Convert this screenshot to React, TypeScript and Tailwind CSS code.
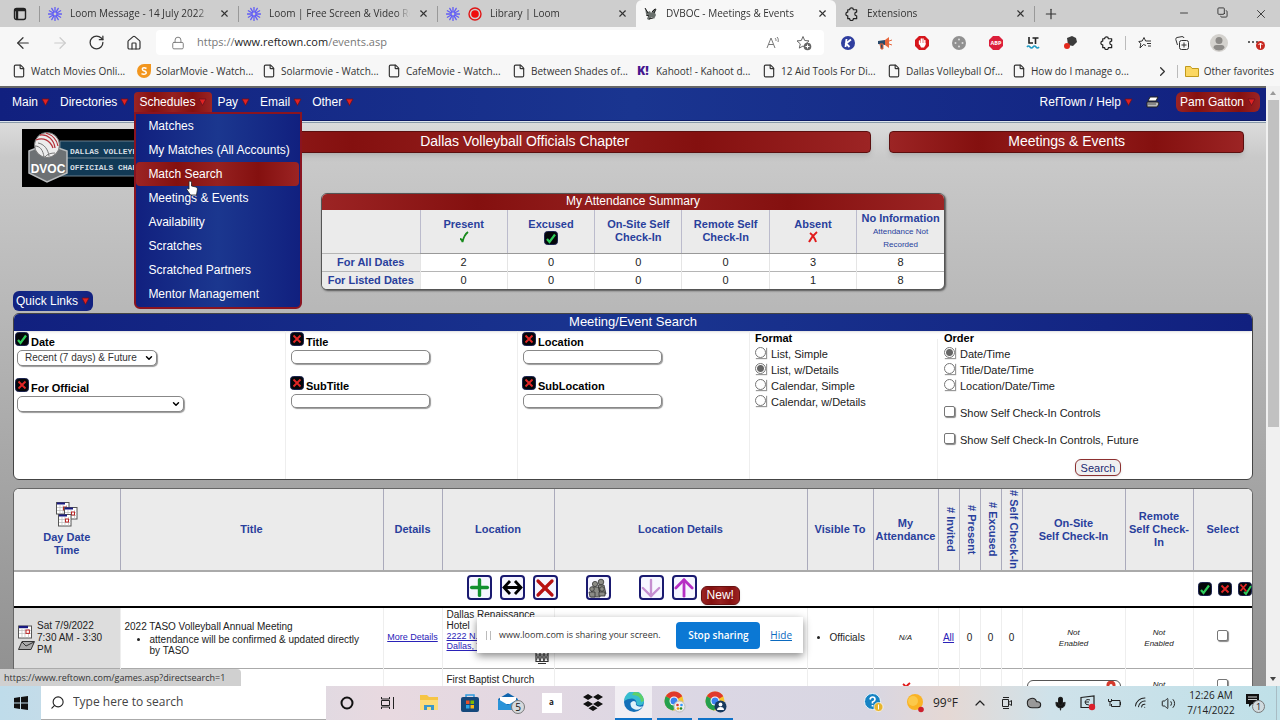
import React from 'react'
import type { ReactNode } from 'react'
import {
  ArrowDown,
  ArrowLeft,
  ArrowRight,
  ArrowUp,
  ChevronDown,
  ChevronRight,
  ChevronUp,
  Cloud,
  Copy,
  File,
  House,
  Lock,
  Mic,
  Minus,
  Plus,
  RotateCw,
  Search,
  Star,
  Volume2,
  Wifi,
  X,
} from 'lucide-react'

const uiFont = "font-['Open_Sans','Noto_Sans',sans-serif]"
const pageFont = "font-['Liberation_Sans',Arial,sans-serif]"

const blueBar = 'bg-[linear-gradient(90deg,#11207f,#1a3590_50%,#11207f)]'
const redBar = 'bg-[linear-gradient(90deg,#9c2424,#84100f_25%,#962120_50%,#84100f_75%,#9c2424)]'

const favorites = [
  { icon: 'file', label: 'Watch Movies Onli...' },
  { icon: 'solar', label: 'SolarMovie - Watch...' },
  { icon: 'file', label: 'Solarmovie - Watch...' },
  { icon: 'file', label: 'CafeMovie - Watch...' },
  { icon: 'file', label: 'Between Shades of...' },
  { icon: 'kahoot', label: 'Kahoot! - Kahoot d...' },
  { icon: 'file', label: '12 Aid Tools For Di...' },
  { icon: 'file', label: 'Dallas Volleyball Of...' },
  { icon: 'file', label: 'How do I manage o...' },
]

const scheduleItems = [
  'Matches',
  'My Matches (All Accounts)',
  'Match Search',
  'Meetings & Events',
  'Availability',
  'Scratches',
  'Scratched Partners',
  'Mentor Management',
]

/* ---------- small drawings ---------- */

const LoomMark = () => (
  <svg viewBox="0 0 14 14" className="size-[14px] shrink-0" aria-hidden="true">
    {[0, 30, 60, 90, 120, 150].map((a) => (
      <path key={a} d="M7 0.5V13.5" stroke="#625df5" strokeWidth="1.3" strokeLinecap="round" transform={`rotate(${a} 7 7)`} />
    ))}
    <circle cx="7" cy="7" r="2.4" fill="#625df5" />
    <circle cx="7" cy="7" r="1.4" fill="#cecece" />
  </svg>
)

const RecordDot = () => (
  <svg viewBox="0 0 14 14" className="size-[14px] shrink-0" aria-hidden="true">
    <circle cx="7" cy="7" r="6" fill="none" stroke="#e01515" strokeWidth="1.4" />
    <circle cx="7" cy="7" r="3.8" fill="#f00d0d" />
  </svg>
)

const PageMark = () => (
  <svg viewBox="0 0 14 14" className="size-[14px] shrink-0" aria-hidden="true">
    <path d="M1 1l3 4 2-1 1 2 2-3 3-2-1 5 1 2-2 4-2-2-3 3-2-1 1-3-2-2z" fill="#6a706d" />
    <path d="M2 8l3 1M8 5l3-3M5 12l4-1M1 1l3 5M10 6l2-4" stroke="#1d1d1d" strokeWidth="1" />
  </svg>
)

const PuzzleMark = () => (
  <svg viewBox="0 0 16 16" className="size-[15px] shrink-0" fill="none" stroke="#222" strokeWidth="1.300" strokeLinejoin="round" aria-hidden="true">
    <path d="M4 4h2a2 2 0 0 1 4 0h3.500v2.500a2 2 0 0 0 0 4V13.500H10a2 2 0 0 1-4 0H4v-3a2 2 0 0 1 0-4z" />
  </svg>
)

const MenuArrow = () => (
  <svg viewBox="0 0 9 8" className="h-2 w-[9px] shrink-0" aria-hidden="true">
    <path d="M1 1h7L4.500 7.500z" fill="#e02222" stroke="#6b1020" strokeWidth="0.800" />
  </svg>
)

const CheckBadge = () => (
  <svg viewBox="0 0 14 14" className="size-[14px] shrink-0" aria-hidden="true">
    <rect x="0.500" y="0.500" width="13" height="13" rx="3" fill="#04060a" stroke="#1b2350" />
    <path d="M3 8l2.500 3L11 3.500" fill="none" stroke="#2ecc5a" strokeWidth="2.200" />
  </svg>
)

const CrossBadge = () => (
  <svg viewBox="0 0 14 14" className="size-[14px] shrink-0" aria-hidden="true">
    <rect x="0.500" y="0.500" width="13" height="13" rx="3" fill="#04060a" stroke="#1b2350" />
    <path d="M3.500 3.500l7 7M10.500 3.500l-7 7" stroke="#e02626" strokeWidth="1.900" />
  </svg>
)

const ToggleBadge = () => (
  <svg viewBox="0 0 14 14" className="size-[14px] shrink-0" aria-hidden="true">
    <rect x="0.500" y="0.500" width="13" height="13" rx="3" fill="#04060a" stroke="#1b2350" />
    <path d="M2.500 2.500l6 7M8.500 2l-6 7" stroke="#e02626" strokeWidth="1.800" />
    <path d="M6 10l2 2 5-8" fill="none" stroke="#2ecc5a" strokeWidth="1.900" />
  </svg>
)

const CalendarMark = () => (
  <svg viewBox="0 0 14 14" className="size-[14px]" aria-hidden="true">
    <rect x="0.500" y="1" width="13" height="12" fill="#fff" stroke="#555" />
    <path d="M1 2h9" stroke="#1a1a80" strokeWidth="2.400" />
    <path d="M1 5.500h12M1 8.500h12M4 4v9M7 4v9M10.500 4v9" stroke="#bbb" strokeWidth="0.700" />
    <rect x="8" y="5" width="3.400" height="3.400" fill="#fff" stroke="#b22" />
  </svg>
)

const CalendarStack = () => (
  <svg viewBox="0 0 22 25" className="mx-auto h-[25px] w-[22px]" aria-hidden="true">
    {[[0, 0], [8, 5], [2, 12]].map(([x, y]) => (
      <g key={x} transform={`translate(${x} ${y})`}>
        <rect x="0.500" y="0.500" width="12.500" height="11.500" fill="#fff" stroke="#555" />
        <path d="M1 1.500h8" stroke="#1a1a80" strokeWidth="2" />
        <path d="M1 5.500h12M1 8.500h12M4 3v9M7 3v9M10.500 3v9" stroke="#bbb" strokeWidth="0.700" />
        <rect x="7.500" y="5" width="3" height="3" fill="#fff" stroke="#b22" />
      </g>
    ))}
  </svg>
)

const Envelope = () => (
  <svg viewBox="0 0 17 9" className="h-[9px] w-[17px]" aria-hidden="true">
    <path d="M4 0.500h12.500L13 8.500H0.500z" fill="#aaa" stroke="#333" />
    <path d="M4 1l4 4 8-4" fill="none" stroke="#333" />
  </svg>
)

const ChapterLogo = () => (
  <svg viewBox="0 0 138 58" className="h-[58px] w-[138px]" role="img" aria-label="Dallas Volleyball Officials Chapter">
    <rect width="138" height="58" fill="#000" />
    <rect x="38" y="12" width="94" height="35" fill="#123a56" stroke="#6b7f8c" />
    <path d="M44 29h88" stroke="#6b7f8c" />
    <path d="M7 22l18-7 20 7v22L25 53 7 44z" fill="#6d7174" stroke="#b9bcbe" strokeWidth="1.500" />
    <circle cx="25" cy="16" r="12.500" fill="#ececec" stroke="#777" />
    <path d="M14 11c7-3 14 0 17 8M18 6c8-1 14 5 15 13M24 4c6 2 11 7 12 13" fill="none" stroke="#b5313a" strokeWidth="1.300" />
    <path d="M13 17c5 0 8 4 9 11M16 14c6 1 10 6 11 13M33 24c-4 0-8 1-10 4" fill="none" stroke="#777" />
    <text x="26" y="44" textAnchor="middle" fontSize="12" fontWeight="700" fill="#fff">DVOC</text>
    <text x="48" y="25" fontSize="8" fontWeight="700" fill="#d5dde2" className="font-['Liberation_Mono',monospace]">DALLAS VOLLEYBALL</text>
    <text x="48" y="41" fontSize="8" fontWeight="700" fill="#d5dde2" className="font-['Liberation_Mono',monospace]">OFFICIALS CHAPTER</text>
  </svg>
)

const Chrome = ({ children }: { children?: ReactNode }) => (
  <svg viewBox="0 0 22 22" className="size-[22px]" aria-hidden="true">
    <circle cx="10" cy="10" r="9.500" fill="#f7c52c" />
    <path d="M10 10L1.800 5.200A9.500 9.500 0 0 1 18.300 5.300z" fill="#e0392d" />
    <path d="M10 10L1.800 5.200A9.500 9.500 0 0 0 9 19.500l4-6z" fill="#24a04e" />
    <circle cx="10" cy="10" r="4.500" fill="#fff" />
    <circle cx="10" cy="10" r="3.500" fill="#3b82f0" />
    {children}
  </svg>
)

/* ---------- browser chrome ---------- */

type TabProps = { icons: ReactNode; label: string; active?: boolean }

const BrowserTab = ({ icons, label, active }: TabProps) => (
  <div
    className={
      active
        ? 'flex h-full w-[200px] items-center gap-2 rounded-t-md bg-[#f7f7f7] px-2'
        : 'flex h-full w-[198px] items-center gap-2 px-2'
    }
  >
    {icons}
    <button className="flex-1 overflow-hidden mask-r-from-90% text-left whitespace-nowrap">{label}</button>
    <button aria-label={`Close ${label}`}>
      <X className="size-[11px]" strokeWidth={2.4} />
    </button>
  </div>
)

const TabBar = () => (
  <header className="flex h-[27px] shrink-0 items-center bg-[#cecece] text-[10px] text-[#333]">
    <button aria-label="Tab actions" className="flex w-[39px] justify-center">
      <svg viewBox="0 0 14 14" className="size-[14px]" aria-hidden="true">
        <rect x="1.500" y="1.500" width="11" height="11" rx="2" fill="none" stroke="#222" strokeWidth="1.400" />
        <path d="M1.500 3h11M4 3v9" stroke="#222" strokeWidth="2.400" />
      </svg>
    </button>
    <span className="h-4 w-px bg-[#999]" />
    <BrowserTab icons={<LoomMark />} label="Loom Message - 14 July 2022" />
    <span className="h-4 w-px bg-[#999]" />
    <BrowserTab icons={<LoomMark />} label="Loom | Free Screen & Video Rec" />
    <span className="h-4 w-px bg-[#999]" />
    <BrowserTab icons={<><LoomMark /><RecordDot /></>} label="Library | Loom" />
    <BrowserTab active icons={<PageMark />} label="DVBOC - Meetings & Events" />
    <BrowserTab icons={<PuzzleMark />} label="Extensions" />
    <span className="h-4 w-px bg-[#999]" />
    <button aria-label="New tab" className="ml-2"><Plus className="size-[16px]" strokeWidth={1.8} /></button>
    <div className="ml-auto flex">
      <button aria-label="Minimize" className="flex w-[38px] justify-center"><Minus className="size-[12px]" strokeWidth={1.8} /></button>
      <button aria-label="Restore" className="flex w-[38px] justify-center"><Copy className="size-[11px] -scale-x-100 rotate-90" strokeWidth={2} /></button>
      <button aria-label="Close window" className="flex w-[39px] justify-center"><X className="size-[14px]" strokeWidth={1.6} /></button>
    </div>
  </header>
)

const ToolButton = ({ label, children }: { label: string; children: ReactNode }) => (
  <button aria-label={label} className="flex w-[37px] shrink-0 items-center justify-center">{children}</button>
)

const AddressRow = () => (
  <div className="flex h-[31px] shrink-0 items-center bg-[#f7f7f7] pr-[6px] pl-[4px] text-[#333]">
    <ToolButton label="Back"><ArrowLeft className="size-[18px]" strokeWidth={1.6} /></ToolButton>
    <ToolButton label="Forward"><ArrowRight className="size-[18px] text-[#ccc]" strokeWidth={1.6} /></ToolButton>
    <ToolButton label="Refresh"><RotateCw className="size-[17px]" strokeWidth={1.8} /></ToolButton>
    <ToolButton label="Home"><House className="size-[16px]" strokeWidth={1.8} /></ToolButton>
    <div className="ml-1 flex h-[25px] flex-1 items-center rounded bg-white pr-3 pl-[15px] text-[#777]">
      <Lock className="size-[14px]" strokeWidth={1.6} />
      <a href="#" className="ml-3 flex-1 text-[11px]">https://<span className="text-[#222]">www.reftown.com</span>/events.asp</a>
      <button aria-label="Read aloud" className="mr-4">
        <svg viewBox="0 0 14 14" className="size-[14px]" fill="none" stroke="#777" aria-hidden="true">
          <path d="M1 12L5 2l4 10M2.500 8.500h5M9 2c1 1 1 2 1 3M11 1c1.500 1.500 1.500 3.500 1 5" />
        </svg>
      </button>
      <button aria-label="Add to favorites">
        <svg viewBox="0 0 16 16" className="size-4" aria-hidden="true">
          <path d="M7 1.500l1.700 4 4.300.4-3.300 3 .8 4.200L7 11l-3.700 2.100 1-4.200L1 5.900l4.300-.4z" fill="none" stroke="#666" />
          <circle cx="11.500" cy="11.500" r="3.800" fill="#666" />
          <path d="M11.500 9.500v4M9.500 11.500h4" stroke="#fff" />
        </svg>
      </button>
    </div>
    <div className="ml-[5px] flex">
      <ToolButton label="K extension">
        <svg viewBox="0 0 14 14" className="size-[14px]" aria-hidden="true"><circle cx="7" cy="7" r="7" fill="#303f9f" /><path d="M5.500 3L4.500 11M10 3.500L5 7.500l3.500 3.500" stroke="#fff" strokeWidth="1.800" fill="none" /></svg>
      </ToolButton>
      <ToolButton label="Announcements">
        <svg viewBox="0 0 14 14" className="size-[14px]" aria-hidden="true"><path d="M0 5l7-1v5L0 8z" fill="#2b4a6b" /><path d="M7 4l4-3v11L7 9z" fill="#e8663c" /><path d="M2 8h3v5H3zM11 5l3-1M11 8l3 1" fill="#2b4a6b" stroke="#e8663c" /></svg>
      </ToolButton>
      <ToolButton label="AdBlock">
        <svg viewBox="0 0 14 14" className="size-[14px]" aria-hidden="true"><path d="M4 0h6l4 4v6l-4 4H4l-4-4V4z" fill="#d6161c" /><path d="M4.500 8V5M6.300 7V3M8 7V3M9.800 8V4.500" stroke="#fff" strokeWidth="1.400" strokeLinecap="round" /><path d="M4 7h6.500v2L9 11.500H6z" fill="#fff" /></svg>
      </ToolButton>
      <ToolButton label="Cookie">
        <svg viewBox="0 0 14 14" className="size-[14px]" aria-hidden="true"><circle cx="7" cy="7" r="7" fill="#919191" /><g fill="#ddd"><circle cx="7" cy="3.500" r="1" /><circle cx="3.500" cy="7" r="1" /><circle cx="10.500" cy="7" r="1" /><circle cx="7" cy="10.500" r="1" /></g></svg>
      </ToolButton>
      <ToolButton label="Adblock Plus">
        <svg viewBox="0 0 14 14" className="size-[14px]" aria-hidden="true"><path d="M4 0h6l4 4v6l-4 4H4l-4-4V4z" fill="#dc1f3b" /><text x="7" y="9" textAnchor="middle" fontSize="5.500" fontWeight="700" fill="#fff">ABP</text></svg>
      </ToolButton>
      <ToolButton label="LanguageTool">
        <svg viewBox="0 0 14 14" className="size-[14px]" aria-hidden="true"><path d="M3 1v6h4M6.500 2h6M9.500 2v6" stroke="#222" strokeWidth="1.600" fill="none" /><path d="M1 11q1.500-2 3 0t3 0 3 0 3 0" stroke="#1f9bc4" strokeWidth="1.600" fill="none" /></svg>
      </ToolButton>
      <ToolButton label="Pin">
        <svg viewBox="0 0 14 14" className="size-[14px]" aria-hidden="true"><path d="M4 2l5-2 4 2 1 4-4 4-5-1z" fill="#3c3c3c" /><circle cx="4" cy="10" r="3" fill="#e3291c" /></svg>
      </ToolButton>
      <ToolButton label="Extensions"><PuzzleMark /></ToolButton>
    </div>
    <span className="h-[14px] w-px bg-[#bbb]" />
    <ToolButton label="Favorites">
      <svg viewBox="0 0 14 14" className="size-[14px]" fill="none" stroke="#333" aria-hidden="true"><path d="M8 9.500L5.500 8.500 2 12l.8-4.200L.8 5.500l3.400-.5L6 1.500 7.600 5H13M9 7.500h4M10 10h3" /></svg>
    </ToolButton>
    <ToolButton label="Collections">
      <svg viewBox="0 0 14 14" className="size-[14px]" fill="none" stroke="#333" aria-hidden="true"><rect x="4.500" y="4.500" width="9" height="9" rx="2" /><path d="M9 6.500v5M6.500 9h5M2.500 9L.8 3.500Q.5 2 2 1.500L7 .6q1.500-.2 2 1.400" /></svg>
    </ToolButton>
    <ToolButton label="Profile">
      <svg viewBox="0 0 18 18" className="size-[18px]" aria-hidden="true"><circle cx="9" cy="9" r="9" fill="#d4d2ce" /><circle cx="9" cy="6.500" r="3.500" fill="#8d8b88" /><path d="M3.500 14q0-3 3-3h5q3 0 3 3-2 2.500-5.500 2.500T3.500 14z" fill="#8d8b88" /></svg>
    </ToolButton>
    <ToolButton label="Settings and more">
      <svg viewBox="0 0 18 14" className="h-[14px] w-[18px]" aria-hidden="true"><g fill="#333"><circle cx="2" cy="6" r="1" /><circle cx="6" cy="6" r="1" /><circle cx="10" cy="6" r="1" /></g><circle cx="13.500" cy="9.500" r="4.500" fill="#c92a22" /><path d="M13.500 12.500V7M11.500 9l2-2 2 2" stroke="#fff" fill="none" /></svg>
    </ToolButton>
  </div>
)

const FavoriteIcon = ({ kind }: { kind: string }) => {
  if (kind === 'solar') {
    return (
      <svg viewBox="0 0 14 14" className="size-[14px] shrink-0" aria-hidden="true"><path d="M0 7a7 7 0 0 1 7-7h7v7a7 7 0 0 1-14 0z" fill="#f2961f" /><path d="M9.500 4.500Q7 3 5.500 4.300 5 6.500 7.500 7q2.300.8 1.500 2.500Q7 11 4.500 9.600" stroke="#fff" strokeWidth="1.500" fill="none" /></svg>
    )
  }
  if (kind === 'kahoot') {
    return <span className="w-[14px] shrink-0 text-xs font-extrabold text-[#46178f]">K!</span>
  }
  return <File className="size-[14px] shrink-0" strokeWidth={2} />
}

const FavoritesBar = () => (
  <nav className="flex h-[28px] shrink-0 items-center bg-[#f7f7f7] pb-[2px] pl-3 text-[10px] text-[#333]">
    {favorites.map((item) => (
      <a href="#" key={item.label} className="flex w-[125px] items-center gap-[5px] whitespace-nowrap">
        <FavoriteIcon kind={item.icon} />
        {item.label}
      </a>
    ))}
    <button aria-label="More favorites" className="ml-auto"><ChevronRight className="size-[15px]" strokeWidth={2} /></button>
    <span className="mx-[7px] h-[13px] w-px bg-[#bbb]" />
    <a href="#" className="flex items-center gap-[5px] pr-[6px] whitespace-nowrap">
      <svg viewBox="0 0 14 12" className="h-3 w-[14px]" aria-hidden="true"><path d="M.5 1.500h5l1.500 2h6.500v8H.5z" fill="#fbd762" stroke="#c19a1c" /></svg>
      Other favorites
    </a>
  </nav>
)

/* ---------- site navigation ---------- */

const MenuButton = ({ label }: { label: string }) => (
  <button className="flex items-center gap-[3px] px-[5px] py-[2px]">{label}<MenuArrow /></button>
)

const ScheduleMenu = () => (
  <ul className="absolute top-5 left-0 z-20 w-[168px] rounded-b-md border-2 border-[#8a1420] bg-[linear-gradient(90deg,#11207f,#1b378f_50%,#11207f)] pb-px">
    {scheduleItems.map((item) => (
      <li key={item}>
        <a
          href="#"
          className={
            item === 'Match Search'
              ? `mr-px flex h-6 items-center rounded pl-3 ${redBar}`
              : 'flex h-6 items-center pl-3'
          }
        >
          {item}
        </a>
      </li>
    ))}
    <svg viewBox="0 0 12 16" className="absolute top-[66px] left-[50px] h-4 w-3" aria-hidden="true">
      <path d="M4 1q1.500 0 1.500 1.500V6l4.500 1q1.500.5 1.500 2L10.500 15H4.500L.8 9.500Q1.500 8 3 9V2Q3 1 4 1z" fill="#fff" stroke="#222" strokeWidth="0.800" />
    </svg>
  </ul>
)

const SiteNav = () => (
  <nav className={`flex h-[33px] items-center border-b border-[#0d1a66] pr-[6px] pb-[4px] pl-[7px] text-xs text-white ${blueBar}`}>
    <MenuButton label="Main" />
    <MenuButton label="Directories" />
    <div className={`relative rounded-t ${redBar}`}>
      <MenuButton label="Schedules" />
      <ScheduleMenu />
    </div>
    <MenuButton label="Pay" />
    <MenuButton label="Email" />
    <MenuButton label="Other" />
    <div className="ml-auto flex items-center">
      <MenuButton label="RefTown / Help" />
      <button aria-label="Print" className="mr-4 ml-2">
        <svg viewBox="0 0 14 12" className="h-3 w-[14px]" aria-hidden="true"><path d="M4 1h8l-2 4H2z" fill="#fff" stroke="#222" /><path d="M1 6h11l1 2-2 3H1z" fill="#bbb" stroke="#222" /><path d="M2 8h8" stroke="#555" /></svg>
      </button>
      <button className={`flex items-center gap-[3px] rounded-md px-1 py-[2px] ${redBar}`}>Pam Gatton<MenuArrow /></button>
    </div>
  </nav>
)

/* ---------- page content ---------- */

const attendance = [
  { label: 'For All Dates', values: [2, 0, 0, 0, 3, 8] },
  { label: 'For Listed Dates', values: [0, 0, 0, 0, 1, 8] },
]

const summaryHead = 'border border-[#bbc] border-t-0 border-b-[#999] p-0 leading-[13px] font-bold'

const AttendanceSummary = () => (
  <section className="mx-auto mt-[6px] w-[624px] overflow-hidden rounded-md border border-[#555] bg-white text-[11px] shadow-[1px_1px_2px_#555]">
    <h2 className={`h-[16px] text-center text-xs leading-[15px] text-white ${redBar}`}>My Attendance Summary</h2>
    <table className="w-full table-fixed border-collapse text-center">
      <colgroup><col className="w-[98px]" /></colgroup>
      <thead>
        <tr className="h-[43px] bg-[#ebebeb] text-[#293f9c]">
          <th aria-label="Range" />
          <th className={summaryHead}>
            Present
            <svg viewBox="0 0 12 13" className="mx-auto h-[13px] w-3" aria-hidden="true"><path d="M2 8q2 0 2.500 3Q6 4 10 1" stroke="#188a1c" strokeWidth="1.800" fill="none" /></svg>
          </th>
          <th className={summaryHead}><span className="flex flex-col items-center">Excused<CheckBadge /></span></th>
          <th className={summaryHead}>On-Site Self<br />Check-In</th>
          <th className={summaryHead}>Remote Self<br />Check-In</th>
          <th className={summaryHead}>
            Absent
            <svg viewBox="0 0 12 13" className="mx-auto h-[13px] w-3" aria-hidden="true"><path d="M3 2q4 3 6 9M10 1Q5 5 2 11" stroke="#e11b1b" strokeWidth="2" fill="none" /></svg>
          </th>
          <th className="border-b border-[#999] p-0 leading-[13px] font-bold">
            No Information
            <span className="block text-[8px] font-normal">Attendance Not Recorded</span>
          </th>
        </tr>
      </thead>
      <tbody>
        {attendance.map((row) => (
          <tr key={row.label} className="h-[18px] border-t border-[#b5b5b5]">
            <th className="bg-[#ebebeb] p-0 leading-[15px] text-[#293f9c]">{row.label}</th>
            {row.values.map((value, i) => (
              <td key={i} className="border-l border-[#e5e5e5] p-0 leading-[15px] text-[#222]">{value}</td>
            ))}
          </tr>
        ))}
      </tbody>
    </table>
  </section>
)

const fieldStyle = 'rounded-[5px] border border-[#888] bg-white shadow-[1px_1px_1px_#999]'

type FieldProps = { id: string; label: string; on?: boolean }

const FieldLabel = ({ id, label, on }: FieldProps) => (
  <div className="flex h-[19px] gap-[2px] pt-px">
    <button type="button" aria-label={`Toggle ${label}`} className="flex items-start">{on ? <CheckBadge /> : <CrossBadge />}</button>
    <label htmlFor={id} className="pt-[3px] leading-[15px] font-bold text-black">{label}</label>
  </div>
)

const TextField = ({ id, label }: FieldProps) => (
  <div className="mb-[11px]">
    <FieldLabel id={id} label={label} />
    <input id={id} type="text" className={`ml-px block h-[14px] w-[139px] ${fieldStyle}`} />
  </div>
)

const SelectField = ({ id, label, on, option, wide }: FieldProps & { option: string; wide?: boolean }) => (
  <div className="mb-[11px]">
    <FieldLabel id={id} label={label} on={on} />
    <div className={wide ? 'relative ml-[2px] w-[167px]' : 'relative ml-[2px] w-[140px]'}>
      <select id={id} className={`block h-4 w-full appearance-none pl-[7px] text-[10px] leading-[14px] text-[#333] ${fieldStyle}`}>
        <option>{option}</option>
      </select>
      <ChevronDown className="pointer-events-none absolute top-[3px] right-[3px] size-[10px] text-black" strokeWidth={3.5} />
    </div>
  </div>
)

const RadioRow = ({ name, label, checked }: { name: string; label: string; checked?: boolean }) => (
  <label className="flex h-4 items-center gap-[5px]">
    <span className="mb-[3px] flex shadow-[1px_1px_1px_#999]">
      <input
        type="radio"
        name={name}
        defaultChecked={checked}
        className="size-[11px] appearance-none rounded-full border border-[#777] bg-white checked:bg-[radial-gradient(circle,#666_0_3px,#fff_4px)]"
      />
    </span>
    {label}
  </label>
)

const tickBox = 'size-[11px] appearance-none rounded-[2px] border border-[#777] bg-white shadow-[1px_1px_1px_#888] checked:bg-[#666]'

const TickRow = ({ label }: { label: string }) => (
  <label className="mt-[11px] flex h-4 items-center gap-[5px]">
    <input type="checkbox" className={`mb-[3px] ${tickBox}`} />
    {label}
  </label>
)

const SearchPanel = () => (
  <section className="mx-[13px] mt-[2px] overflow-hidden rounded-md border border-[#444] bg-white text-[11px] text-[#222]">
    <h2 className={`h-[17px] text-center text-[13px] leading-[16px] text-white shadow ${blueBar}`}>Meeting/Event Search</h2>
    <form className="grid h-[148px] grid-cols-[272px_232px_232px_188px_1fr] divide-x divide-[#eee]">
      <div className="pl-px">
        <SelectField id="date" label="Date" on option="Recent (7 days) & Future" />
        <SelectField id="official" label="For Official" option="" wide />
      </div>
      <div className="pl-[4px]">
        <TextField id="title" label="Title" />
        <TextField id="subtitle" label="SubTitle" />
      </div>
      <div className="pl-[4px]">
        <TextField id="location" label="Location" />
        <TextField id="sublocation" label="SubLocation" />
      </div>
      <fieldset className="pl-[5px]">
        <legend className="leading-[15px] font-bold text-black">Format</legend>
        <RadioRow name="format" label="List, Simple" />
        <RadioRow name="format" label="List, w/Details" checked />
        <RadioRow name="format" label="Calendar, Simple" />
        <RadioRow name="format" label="Calendar, w/Details" />
      </fieldset>
      <fieldset className="pl-[6px]">
        <legend className="leading-[15px] font-bold text-black">Order</legend>
        <RadioRow name="order" label="Date/Time" checked />
        <RadioRow name="order" label="Title/Date/Time" />
        <RadioRow name="order" label="Location/Date/Time" />
        <TickRow label="Show Self Check-In Controls" />
        <TickRow label="Show Self Check-In Controls, Future" />
        <button type="button" className="mx-auto mt-[11px] block h-[17px] rounded-md border border-[#8c3030] bg-[#f0f0f0] px-[5px] text-[11px] leading-[14px] text-[#1c2a70] shadow">
          Search
        </button>
      </fieldset>
    </form>
  </section>
)

const IconButton = ({ label, className, children }: { label: string; className?: string; children: ReactNode }) => (
  <button aria-label={label} className={`flex size-[25px] items-center justify-center rounded-sm border-2 border-[#1a1a70] bg-[#f6f6ff] ${className ?? ''}`}>
    {children}
  </button>
)

const headCell = 'border-l border-[#aab] p-0 leading-[13px] font-bold'
const bodyCell = 'border-l border-[#eee] p-0'

const NotEnabled = () => <span className="block text-[8px] leading-[11px] italic">Not<br />Enabled</span>

const VerticalHead = ({ children }: { children: string }) => (
  <th className={`${headCell} pl-1`}>
    <span className="inline-block align-middle whitespace-nowrap [writing-mode:vertical-rl]">{children}</span>
  </th>
)

const EventsTable = () => (
  <section className="mx-[13px] mt-2 overflow-hidden rounded-t-md border-x border-t border-[#666] bg-white">
    <table className="w-full table-fixed border-collapse text-center text-[10px] text-[#222]">
      <colgroup>
        <col className="w-[106px]" />
        <col className="w-[263px]" />
        <col className="w-[59px]" />
        <col className="w-[112px]" />
        <col />
        <col className="w-[66px]" />
        <col className="w-[65px]" />
        <col className="w-[21px]" />
        <col className="w-[21px]" />
        <col className="w-[21px]" />
        <col className="w-[21px]" />
        <col className="w-[103px]" />
        <col className="w-[68px]" />
        <col className="w-[59px]" />
      </colgroup>
      <thead>
        <tr className="h-[82px] border-b-2 border-[#aaa] bg-[#ebebeb] text-[11px] text-[#293f9c]">
          <th className="p-0 leading-[13px] font-bold"><CalendarStack /><span className="mt-1 block">Day Date<br />Time</span></th>
          <th className={headCell}>Title</th>
          <th className={headCell}>Details</th>
          <th className={headCell}>Location</th>
          <th className={headCell}>Location Details</th>
          <th className={headCell}>Visible To</th>
          <th className={headCell}>My<br />Attendance</th>
          <VerticalHead># Invited</VerticalHead>
          <VerticalHead># Present</VerticalHead>
          <VerticalHead># Excused</VerticalHead>
          <VerticalHead># Self Check-In</VerticalHead>
          <th className={headCell}>On-Site<br />Self Check-In</th>
          <th className={headCell}>Remote<br />Self Check-<br />In</th>
          <th className={headCell}>Select</th>
        </tr>
      </thead>
      <tbody>
        <tr className="h-[36px] border-b-2 border-black">
          <td colSpan={13} className="p-0">
            <div className="flex h-[32px] items-start justify-center gap-2 pt-[2px]">
              <IconButton label="Add"><Plus className="size-[27px] shrink-0 text-[#12902f]" strokeWidth={3} /></IconButton>
              <IconButton label="Resize">
                <svg viewBox="0 0 21 21" className="size-[21px]" fill="none" stroke="#000" strokeWidth="2.800" aria-hidden="true"><path d="M2 10.500h17M8 4l-6 6.500L8 17M13 4l6 6.500-6 6.500" /></svg>
              </IconButton>
              <IconButton label="Delete"><X className="size-[28px] shrink-0 text-[#b81212]" strokeWidth={2.8} /></IconButton>
              <IconButton label="Officials" className="ml-5">
                <svg viewBox="0 0 20 20" className="size-5" aria-hidden="true"><g fill="#8b8b86" stroke="#333" strokeWidth="0.800"><circle cx="13" cy="4" r="2.800" /><circle cx="7" cy="6" r="2.600" /><path d="M10 7h6l2 9h-6zM4 9h7l1 10H3z" /><circle cx="4" cy="11" r="2.300" /><circle cx="14" cy="11" r="2.300" /><path d="M1 14h6v5H2zM11 14h6v4h-6z" /></g></svg>
              </IconButton>
              <IconButton label="Move down" className="ml-5"><ArrowDown className="size-[28px] shrink-0 text-[#c58ed0]" strokeWidth={2} /></IconButton>
              <IconButton label="Move up"><ArrowUp className="size-[28px] shrink-0 text-[#b62fc4]" strokeWidth={2.4} /></IconButton>
              <span className={`-ml-1 self-end rounded-md border border-[#611] px-[5px] text-xs leading-[17px] text-white shadow ${redBar}`}>New!</span>
            </div>
          </td>
          <td className={`${bodyCell} pl-1`}>
            <div className="flex justify-center gap-[6px]">
              <button aria-label="Select all"><CheckBadge /></button>
              <button aria-label="Select none"><CrossBadge /></button>
              <button aria-label="Invert selection"><ToggleBadge /></button>
            </div>
          </td>
        </tr>
        <tr className="h-[61px] border-b border-[#aaa]">
          <td className="bg-[#ddd] p-0 text-left">
            <div className="flex items-center gap-[2px] pr-[10px] pl-1">
              <div className="flex shrink-0 flex-col gap-[2px]"><CalendarMark /><Envelope /></div>
              <p className="leading-[12px]">Sat 7/9/2022<br />7:30 AM - 3:30 PM</p>
            </div>
          </td>
          <td className={`${bodyCell} pl-1 text-left`}>
            <p className="leading-[15px]">2022 TASO Volleyball Annual Meeting</p>
            <ul className="ml-[25px] list-disc leading-[11px]">
              <li className="pr-5">attendance will be confirmed &amp; updated directly by TASO</li>
            </ul>
          </td>
          <td className={`${bodyCell} text-[9px]`}><a href="#" className="text-[#2a22b8] underline">More Details</a></td>
          <td className={`${bodyCell} pl-1 text-left align-top`}>
            <p className="pt-px leading-[11px]">Dallas Renaissance Hotel</p>
            <a href="#" className="block text-[9px] leading-[10px] text-[#2a22b8] underline">2222 N.<br />Dallas, T</a>
            <svg viewBox="0 0 14 14" className="ml-[88px] size-[14px]" aria-hidden="true"><path d="M1 1.500h12v9H1zM1 4h12M5 1.500v9M9 1.500v9M3 12.500h8" fill="none" stroke="#333" strokeWidth="1.200" /><path d="M5 10l2-5 2 5M1.500 9L3 5l1.500 4M9.500 9L11 5l1.500 4" stroke="#333" fill="none" strokeWidth="0.800" /></svg>
          </td>
          <td className={bodyCell} />
          <td className={`${bodyCell} text-left`}><ul className="ml-[22px] list-disc"><li>Officials</li></ul></td>
          <td className={`${bodyCell} text-[8px] italic`}>N/A</td>
          <td className={bodyCell}><a href="#" className="text-[#2a22b8] underline">All</a></td>
          <td className={bodyCell}>0</td>
          <td className={bodyCell}>0</td>
          <td className={bodyCell}>0</td>
          <td className={bodyCell}><NotEnabled /></td>
          <td className={bodyCell}><NotEnabled /></td>
          <td className={bodyCell}><input type="checkbox" aria-label="Select 2022 TASO Volleyball Annual Meeting" className={tickBox} /></td>
        </tr>
        <tr className="h-[61px] align-top">
          <td className="bg-[#ddd] p-0" />
          <td className={bodyCell} />
          <td className={bodyCell} />
          <td className={`${bodyCell} pt-[5px] pl-1 text-left leading-[12px]`}>First Baptist Church</td>
          <td className={bodyCell} />
          <td className={bodyCell} />
          <td className={`${bodyCell} pt-[13px]`}>
            <svg viewBox="0 0 12 13" className="mx-auto h-[13px] w-3" aria-hidden="true"><path d="M3 2q4 3 6 9M10 1Q5 5 2 11" stroke="#e11b1b" strokeWidth="2" fill="none" /></svg>
          </td>
          <td className={bodyCell} />
          <td className={bodyCell} />
          <td className={bodyCell} />
          <td className={bodyCell} />
          <td className={`${bodyCell} px-1 pt-[11px]`}>
            <div className="flex h-8 justify-end rounded-md border border-[#555] pr-1">
              <svg viewBox="0 0 10 14" className="h-[14px] w-[10px]" aria-hidden="true"><path d="M5 13L1 6a4.500 4.500 0 1 1 8 0z" fill="#d33a2c" /><circle cx="5" cy="4.500" r="1.600" fill="#fff" /></svg>
            </div>
          </td>
          <td className={`${bodyCell} pt-[10px]`}><NotEnabled /></td>
          <td className={`${bodyCell} pt-[10px]`}><input type="checkbox" aria-label="Select First Baptist Church event" className={tickBox} /></td>
        </tr>
      </tbody>
    </table>
  </section>
)

const PageScrollbar = () => (
  <div className="flex w-[14px] shrink-0 flex-col items-center justify-between bg-[#f0f0f0] py-[5px]" aria-hidden="true">
    <div className="flex flex-col items-center">
      <svg viewBox="0 0 6 4" className="h-1 w-[6px]"><path d="M0 4l3-4 3 4z" fill="#999" /></svg>
      <div className="mt-[5px] h-[327px] w-[11px] bg-[#c1c1c1]" />
    </div>
    <svg viewBox="0 0 6 4" className="h-1 w-[6px]"><path d="M0 0l3 4 3-4z" fill="#444" /></svg>
  </div>
)

/* ---------- overlays and taskbar ---------- */

const SharingBar = () => (
  <div className={`absolute bottom-[33px] left-[477px] z-30 flex h-9 w-[326px] items-center bg-white pr-[11px] pl-[9px] text-[10px] whitespace-nowrap text-[#333] shadow-[0_3px_8px_#0007] ${uiFont}`}>
    <span className="mr-2 h-[9px] w-[5px] border-x border-[#bbb]" />
    <span className="text-[9px]">www.loom.com is sharing your screen.</span>
    <button className="ml-auto h-[27px] w-[84px] rounded-sm bg-[#0b78d4] font-semibold text-white">Stop sharing</button>
    <a href="#" className="ml-[10px] text-[#0b6abf] underline">Hide</a>
  </div>
)

const TaskSlot = ({ label, state, children }: { label: string; state?: 'open' | 'active'; children: ReactNode }) => (
  <button aria-label={label} className={state === 'active' ? 'flex w-[41px] px-[2px]' : 'flex w-[41px] px-[3px]'}>
    <span
      className={
        state === 'active'
          ? 'flex h-full flex-1 items-center justify-center border-b-2 border-[#0f72c8] bg-white/60'
          : state === 'open'
            ? 'flex h-full flex-1 items-center justify-center border-b-2 border-[#0f72c8]'
            : 'flex h-full flex-1 items-center justify-center'
      }
    >
      {children}
    </span>
  </button>
)

const TraySlot = ({ label, children }: { label: string; children: ReactNode }) => (
  <button aria-label={label} className="flex w-[27px] items-center justify-center text-[#222]">{children}</button>
)

const Taskbar = () => (
  <footer className={`flex h-[34px] shrink-0 bg-[linear-gradient(90deg,#bfdcea,#e8d9e0_30%,#dbd7e4_55%,#d8d6e2_68%,#e5d8d4_74%,#cfe2ea_82%,#bfe0e8)] text-[#222] ${uiFont}`}>
    <button aria-label="Start" className="flex w-[41px] items-center justify-center">
      <svg viewBox="0 0 14 14" className="size-[14px]" aria-hidden="true"><path d="M0 2l6-1v5.500H0zM7 .9L14 0v6.500H7zM0 7.500h6V13l-6-1zM7 7.500h7V14l-7-1z" fill="#111" /></svg>
    </button>
    <label className="flex w-[285px] items-center gap-2 border-b border-[#aaa] bg-white pl-[9px]">
      <Search className="size-[15px] shrink-0 -scale-x-100" strokeWidth={1.8} />
      <input type="text" aria-label="Search" placeholder="Type here to search" className="min-w-0 flex-1 pb-px text-[12px] placeholder:text-[#444]" />
    </label>
    <TaskSlot label="Cortana"><svg viewBox="0 0 14 14" className="size-[14px]"><circle cx="7" cy="7" r="5.500" fill="none" stroke="#111" strokeWidth="2" /></svg></TaskSlot>
    <TaskSlot label="Task view"><svg viewBox="0 0 14 14" className="size-[14px]" fill="none" stroke="#222"><path d="M.5 1v2h8V1M.5 13v-2h8v2M.5 4.500h8v5h-8zM12.500 1v12M12.500 5v3" /></svg></TaskSlot>
    <TaskSlot label="File Explorer"><svg viewBox="0 0 18 16" className="h-4 w-[18px]"><path d="M0 0h7l2 2h9v13H0z" fill="#f6c544" /><path d="M0 5h18v10H0z" fill="#fbdc7a" /><path d="M4 15v-5h10v5h-3v-3H7v3z" fill="#3b97c9" /></svg></TaskSlot>
    <TaskSlot label="Microsoft Store"><svg viewBox="0 0 20 20" className="size-5"><path d="M6 5V2h8v3" fill="none" stroke="#2d9be0" strokeWidth="1.500" /><rect x="1" y="4" width="18" height="15" rx="2" fill="#15487c" /><path d="M6 7.500h3.500V11H6z" fill="#e8512b" /><path d="M10.500 7.500H14V11h-3.500z" fill="#7fba00" /><path d="M6 12h3.500v3.500H6z" fill="#2aa6e8" /><path d="M10.500 12H14v3.500h-3.500z" fill="#fdb813" /></svg></TaskSlot>
    <TaskSlot label="Mail"><svg viewBox="0 0 28 24" className="h-6 w-7"><path d="M1 8l10-6 10 6v11H1z" fill="#0f64ad" /><path d="M3 6h16v7H3z" fill="#fff" /><path d="M1 8l10 6 10-6v11H1z" fill="#2a93d8" /><circle cx="21" cy="16" r="6.500" fill="#d6dadd" stroke="#777" /><text x="21" y="19.500" textAnchor="middle" fontSize="10" fill="#111">5</text></svg></TaskSlot>
    <TaskSlot label="Amazon"><span className="flex size-5 items-center justify-center bg-white pb-[2px] text-[8px] font-bold">a</span></TaskSlot>
    <TaskSlot label="Dropbox"><svg viewBox="0 0 20 18" className="h-[18px] w-5" fill="#111"><path d="M5 0l5 3-5 3-5-3zM15 0l5 3-5 3-5-3zM5 7l5 3-5 3-5-3zM15 7l5 3-5 3-5-3zM10 11.500l4.500 2.800L10 17l-4.500-2.700z" /></svg></TaskSlot>
    <TaskSlot label="Edge" state="active">
      <svg viewBox="0 0 20 20" className="size-5"><circle cx="10" cy="10" r="10" fill="#1470b8" /><path d="M0 9a10 10 0 0 1 20 0q0 4-4.500 4.500-3.500 0-3-2.500 0-4-4.500-4.500-5 0-8 2.500z" fill="#38bdd0" /><path d="M8 3q9 0 9 7l3-1Q19 0 10 0z" fill="#5fd068" /><path d="M12 11q-1 2.500 3 3.500 2 .5 4-.5-3 4.500-8 3.500-5-1.500-4.500-6.500Q8 9 10 9q2 .5 2 2z" fill="#dff3fb" /></svg>
    </TaskSlot>
    <TaskSlot label="Chrome" state="open">
      <Chrome><circle cx="15.500" cy="15.500" r="5.500" fill="#eee" stroke="#bbb" /><circle cx="13.500" cy="14" r="1.300" fill="#d33" /><circle cx="17.500" cy="14" r="1.300" fill="#39f" /><circle cx="14" cy="17.500" r="1.300" fill="#e90" /><circle cx="17" cy="17.500" r="1.300" fill="#282" /></Chrome>
    </TaskSlot>
    <TaskSlot label="Chrome profile" state="open">
      <Chrome><circle cx="15.500" cy="15.500" r="6" fill="#17395e" /><circle cx="15.500" cy="13.500" r="1.900" fill="#fff" /><path d="M12 19q0-3 3.500-3t3.500 3z" fill="#fff" /></Chrome>
    </TaskSlot>
    <div className="ml-auto flex items-center">
      <button aria-label="Get help" className="flex w-[41px]">
        <svg viewBox="0 0 20 20" className="size-5"><circle cx="8.500" cy="8.500" r="8" fill="#1683c4" stroke="#e8f4fa" /><path d="M6 6.500Q6.500 4 8.700 4T11 6.500Q11 8 8.500 9v1.500M8.500 12v1.500" stroke="#fff" strokeWidth="1.700" fill="none" /><circle cx="14.500" cy="14" r="4.500" fill="#e7b52e" stroke="#fff" strokeWidth="0.700" /><path d="M14.500 11.500v5" stroke="#fff" /></svg>
      </button>
      <button className="mr-[8px] flex items-center gap-2 text-[12px]">
        <svg viewBox="0 0 20 20" className="size-5"><circle cx="10" cy="9" r="8" fill="#fab324" /><circle cx="8" cy="8" r="5" fill="#fcc94a" /><circle cx="16" cy="16.500" r="2.800" fill="#cc1f2d" /></svg>
        99°F
      </button>
      <TraySlot label="Show hidden icons"><ChevronUp className="size-[16px]" strokeWidth={1.8} /></TraySlot>
      <TraySlot label="Meet now"><svg viewBox="0 0 14 14" className="size-[14px]" fill="none" stroke="#222"><path d="M3 1.500h6M3 12.500h6M2.500 3.500h6v7h-6zM8.500 6.500l3-2v5l-3-2" /></svg></TraySlot>
      <TraySlot label="OneDrive"><Cloud className="size-[16px] fill-[#999]" strokeWidth={1.6} /></TraySlot>
      <TraySlot label="Microphone"><Mic className="size-[15px] fill-[#111]" strokeWidth={2} /></TraySlot>
      <TraySlot label="Screen recording"><svg viewBox="0 0 16 16" className="size-4"><path d="M1 2.500L14 1v11.500H1z" fill="none" stroke="#222" strokeWidth="1.200" /><path d="M10 5Q6 3.500 5 7q0 3 4 3M5 7h4" stroke="#222" fill="none" /><circle cx="12" cy="12" r="3.200" fill="#dc1f2b" /></svg></TraySlot>
      <TraySlot label="Battery"><svg viewBox="0 0 14 12" className="h-3 w-[14px]" fill="none" stroke="#222"><path d="M4 3.500h8v6H3.500V7M12.500 5v3M.5 2v2.500h3V2M2 4.500V9" /></svg></TraySlot>
      <TraySlot label="Wi-Fi"><Wifi className="size-[15px] rotate-[-40deg]" strokeWidth={1.6} /></TraySlot>
      <TraySlot label="Volume"><Volume2 className="size-[15px]" strokeWidth={1.6} /></TraySlot>
      <p className="w-[58px] text-center text-[10px] leading-[15px]">12:26 AM<br />7/14/2022</p>
      <button aria-label="Notifications" className="flex w-[30px] justify-center">
        <svg viewBox="0 0 20 20" className="size-5"><path d="M1 1h13v10H7l-3 3v-3H1z" fill="#111" /><path d="M3 4h9M3 6.500h9" stroke="#fff" strokeWidth="0.800" /><circle cx="13.500" cy="13.500" r="6" fill="#d0dade" stroke="#777" /><text x="13.500" y="17" textAnchor="middle" fontSize="9" fill="#111">1</text></svg>
      </button>
      <span className="mr-[3px] ml-[6px] h-[34px] w-px bg-[#a8bcc4]" />
    </div>
  </footer>
)

const App = () => {
  return (
    <div className={`relative flex h-screen flex-col overflow-hidden ${uiFont}`}>
      <TabBar />
      <AddressRow />
      <FavoritesBar />

      <div className={`relative flex min-h-0 flex-1 ${pageFont}`}>
        <main className="min-w-0 flex-1 overflow-hidden border-t-2 border-[#666] bg-[linear-gradient(180deg,#dedede_30px,#c9c9c9_70px,#b8b8b8_220px,#a4a4a4_400px,#909090)]">
          <SiteNav />
          <div className="h-[2px] border-b border-[#8899a8] bg-[#dde4ec]" />
          <div className="flex items-start px-[22px] pt-[6px]">
            <ChapterLogo />
            <h1 className={`mt-[2px] ml-[18px] h-[22px] flex-[694_1_0%] rounded border border-[#5c0f0f] text-center text-sm leading-[19px] text-white shadow-md ${redBar}`}>
              Dallas Volleyball Officials Chapter
            </h1>
            <h2 className={`mt-[2px] ml-[18px] h-[22px] flex-[354_1_0%] rounded border border-[#5c0f0f] text-center text-sm leading-[19px] text-white shadow-md ${redBar}`}>
              Meetings &amp; Events
            </h2>
          </div>
          <AttendanceSummary />
          <button className={`mt-px ml-[13px] flex h-[20px] items-center gap-[3px] rounded-md px-[3px] text-xs text-white ${blueBar}`}>
            Quick Links<MenuArrow />
          </button>
          <SearchPanel />
          <EventsTable />
        </main>
        <PageScrollbar />
        <p className={`absolute bottom-0 left-0 z-30 h-[17px] w-[241px] rounded-tr bg-[#d0d0d0] pl-1 text-[9px] leading-[17px] whitespace-nowrap text-[#333] ${uiFont}`}>
          https://www.reftown.com/games.asp?directsearch=1
        </p>
        <SharingBar />
      </div>

      <Taskbar />
    </div>
  )
}

export default App
